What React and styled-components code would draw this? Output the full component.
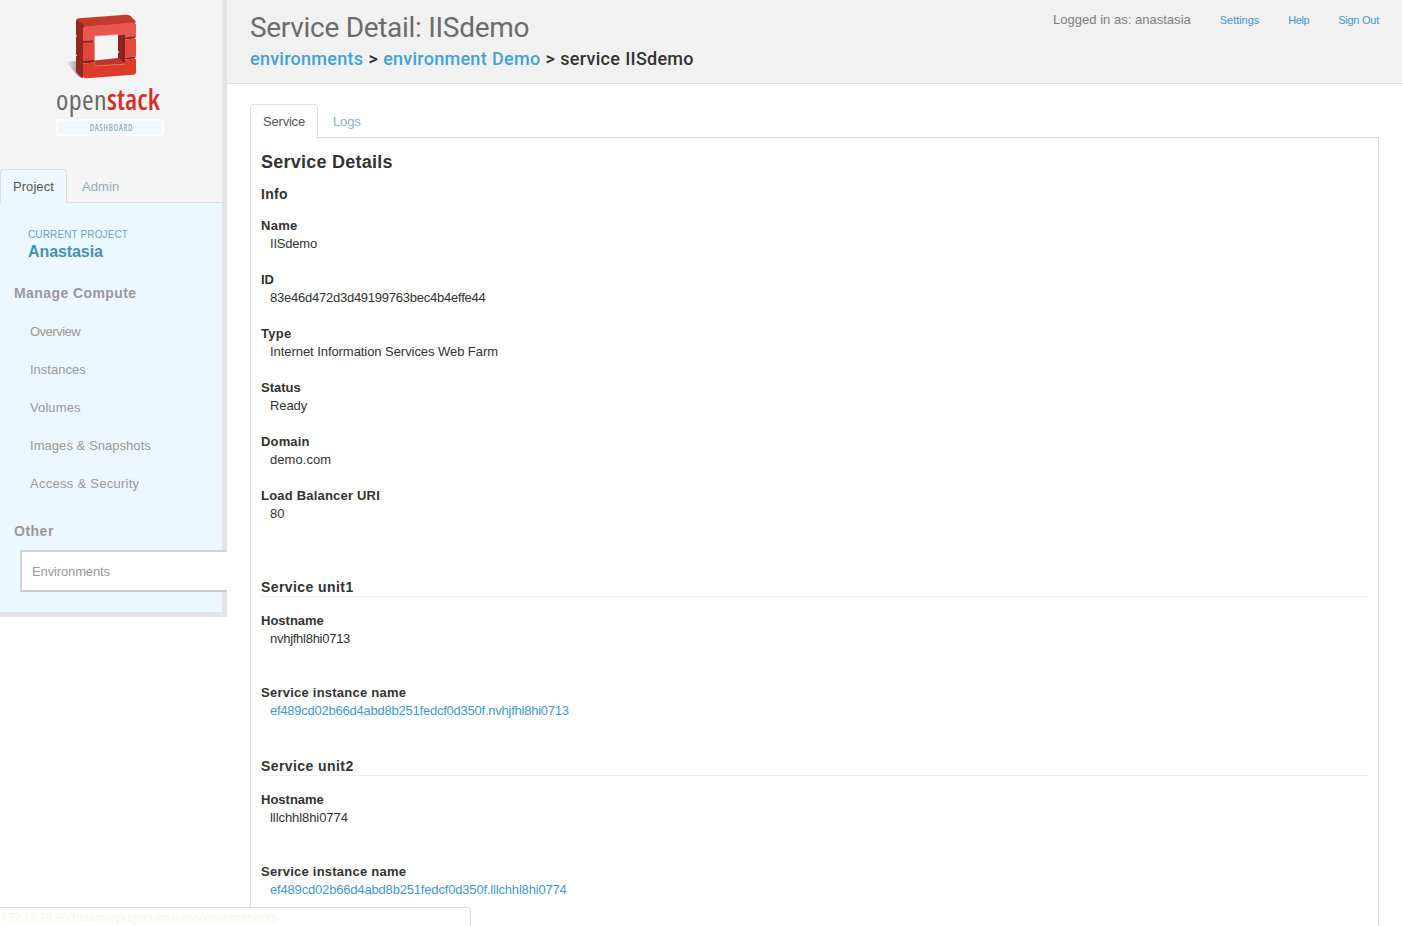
import React from "react";
import styled, { createGlobalStyle } from "styled-components";

const Global = createGlobalStyle`
  * { box-sizing: border-box; }
  body {
    margin: 0;
    background: #fff;
    color: #333;
    font: 13px/18px "Liberation Sans", Arial, sans-serif;
    overflow: hidden;
  }
`;

const Page = styled.div`
  display: flex;
  align-items: flex-start;
  height: 926px;
  overflow: hidden;
`;

/* ---- sidebar ---- */
const Sidebar = styled.aside`
  flex: none;
  width: 227px;
  height: 617px;
  border-right: 5px solid #e4e4e4;
  border-bottom: 5px solid #e4e4e4;
  background: #ecf8ff;
`;
const Brand = styled.div`
  display: flex;
  flex-direction: column;
  height: 169px;
  background: #f4f4f4;
`;
const Wordmark = styled.div`
  display: flex;
  margin-left: 56px;
  font: 400 28px/34px "Open Sans", sans-serif;
  font-stretch: 75%;
  letter-spacing: 0.4px;
  color: #6a6a6a;
`;
const WordmarkAccent = styled.span`
  font-weight: 600;
  letter-spacing: 0.05px;
  color: #d62f2b;
`;
const Badge = styled.div`
  margin: 3px 0 0 56px;
  width: 108px;
  height: 17px;
  border: 2px solid #fcfdfe;
  border-radius: 2px;
  background: #f1f8fc;
  text-align: center;
  font: 400 8.5px/13px "Open Sans", sans-serif;
  font-stretch: 75%;
  letter-spacing: 0.75px;
  padding-left: 3px;
  color: #7e9daf;
`;
const SideTabs = styled.div`
  display: flex;
  height: 34px;
  background: linear-gradient(#ddd, #ddd) bottom / 100% 1px no-repeat #f4f4f4;
`;
const Tab = styled.a`
  height: 34px;
  padding: 8px 12px;
  border: 1px solid ${(p) => (p.$active ? "#ddd" : "transparent")};
  border-bottom: 0;
  border-radius: 4px 4px 0 0;
  margin-right: 2px;
  background: ${(p) => (p.$active ? p.$bg : "transparent")};
  color: ${(p) => (p.$active ? "#555" : "#92aebc")};
  letter-spacing: ${(p) => p.$ls || 0}px;
  white-space: nowrap;
`;
const Project = styled.div`
  padding: 25px 0 0 28px;
`;
const Caption = styled.div`
  font-size: 10px;
  line-height: 14px;
  color: #6aa5c0;
  letter-spacing: 0.13px;
`;
const ProjectName = styled.div`
  font-size: 16px;
  line-height: 20px;
  font-weight: bold;
  color: #4790b2;
  letter-spacing: -0.08px;
`;
const NavHeading = styled.div`
  margin-top: ${(p) => p.$top}px;
  padding-left: 14px;
  font-size: 14px;
  font-weight: bold;
  line-height: 20px;
  color: #999;
  letter-spacing: ${(p) => p.$ls || 0}px;
`;
const NavList = styled.nav`
  display: flex;
  flex-direction: column;
  padding: 10px 0 0 30px;
`;
const NavItem = styled.a`
  height: 38px;
  line-height: 38px;
  color: #999;
  letter-spacing: ${(p) => p.$ls || 0}px;
`;
const ActiveItem = styled.a`
  display: block;
  margin: 9px -5px 0 20px;
  height: 42px;
  padding-left: 10px;
  border: solid #ccc;
  border-width: 2px 0 2px 2px;
  border-top-color: #d4d4d4;
  border-left-color: #d4d4d4;
  background: #fff;
  line-height: 39px;
  color: #999;
  letter-spacing: -0.13px;
`;

/* ---- main column ---- */
const Main = styled.main`
  flex: 1;
  min-width: 0;
`;
const Header = styled.header`
  display: flex;
  justify-content: space-between;
  height: 84px;
  padding: 0 23px;
  background: #f1f1f1;
  border-bottom: 1px solid #e0e0e0;
`;
const Titles = styled.div`
  font-family: Roboto, "Open Sans", sans-serif;
  white-space: nowrap;
`;
const Title = styled.h1`
  margin: 10px 0 0;
  font-size: 28px;
  line-height: 36px;
  font-weight: 400;
  color: #6c6c6c;
  letter-spacing: -0.3px;
`;
const Crumbs = styled.h3`
  margin: 1px 0 0;
  font-size: 18px;
  line-height: 24px;
  font-weight: 500;
  color: #333;
  letter-spacing: 0.26px;
  word-spacing: 0.4px;
`;
const Link = styled.a`
  color: #43a1d6;
`;
const UserInfo = styled.div`
  display: flex;
  padding-top: 11px;
  color: #808080;
  letter-spacing: 0.02px;
`;
const UserLink = styled.a`
  margin-left: 29px;
  font-size: 11px;
  color: #4398d0;
  letter-spacing: ${(p) => p.$ls || 0}px;
`;
const Content = styled.section`
  padding: 20px 23px 0;
`;
const ContentTabs = styled.div`
  display: flex;
  height: 34px;
  background: linear-gradient(#ddd, #ddd) bottom / 100% 1px no-repeat;
`;
const Panel = styled.div`
  height: 788px;
  padding: 12px 10px 0;
  border: solid #ddd;
  border-width: 0 1px;
`;
const PanelTitle = styled.h3`
  margin: 0 0 11px;
  font-size: 18px;
  line-height: 24px;
  letter-spacing: 0.24px;
`;
const SectionTitle = styled.h4`
  margin: 0 0 14px;
  font-size: 14px;
  line-height: 18px;
  letter-spacing: 0.3px;
`;
const UnitTitle = styled.h4`
  margin: ${(p) => p.$top}px 0 15px;
  font-size: 14px;
  line-height: 18px;
  border-bottom: 1px solid #eee;
  letter-spacing: 0.42px;
`;
const Details = styled.dl`
  display: flex;
  flex-direction: column;
  gap: ${(p) => p.$gap}px;
  margin: 0;
`;
const Term = styled.dt`
  font-weight: bold;
  letter-spacing: ${(p) => p.$ls || 0}px;
`;
const Value = styled.dd`
  margin: 0 0 0 9px;
  color: ${(p) => (p.$link ? "#4398d0" : "#333")};
  letter-spacing: ${(p) => p.$ls || 0}px;
`;
const StatusBar = styled.div`
  position: fixed;
  left: 0;
  bottom: 0;
  width: 471px;
  height: 19px;
  padding: 1px 1px 0;
  border: solid #ddd;
  border-width: 1px 1px 0 0;
  border-radius: 0 4px 0 0;
  background: #fff;
  color: #f8f5e8;
  font: 12px/18px "Open Sans", "Noto Sans", sans-serif;
  letter-spacing: -0.36px;
`;

const Logo = () => (
  <svg width="222" height="82" viewBox="0 0 222 82">
    <defs>
      <linearGradient id="shade" x1="0" x2="1">
        <stop offset="0" stopColor="#bbb" stopOpacity="0.2" />
        <stop offset="1" stopColor="#555" />
      </linearGradient>
    </defs>
    <path d="M66.500 62.500Q70 60.500 76 61.500V70L83 78Q80 78 76 74Z" fill="url(#shade)" />
    <path d="M76 21Q76 18.500 79 18.200L126 14.700Q128.500 14.500 130.500 16L136 21.500L134 24L83 28L76 24Z" fill="#c43a2b" />
    <path d="M76 21Q77 19 80 22L84.500 26L83 30V78L81 77L76 71.500V56.500L77 55.500L76 54.500V37L77 36L76 35Z" fill="#952720" />
    <path d="M83 30Q83 26.500 86.500 26.200L133 22.500Q136 22.300 136 25V37L125 38V34L94.500 36V41L83 41Z" fill="#e8564f" />
    <path d="M83 43L94.500 42V61L83 62Z" fill="#e2463a" />
    <path d="M83 41L94 40.500L93 42.500L83 43ZM83 61L94.500 60V62.500L83 63.500ZM125 37.500L136 36.500L134.500 38.500L125 39.500ZM125 57.500L136 56.500L134.500 58.500L125 59.500Z" fill="#8f211b" />
    <path d="M125 39.500L134.500 38.500L136 39.500V56.500L125 57.500Z" fill="#e3483c" />
    <path d="M83 63.500L94.500 62.500V66L125 64V59.500L134.500 58.500L136 59.500V72Q136 74.500 133 74.800L87 78.200Q83 78.500 83 76Z" fill="#dc3c28" />
    <path d="M118 34.500L125 34V64L118 58.500V53L119.500 52L118 51Z" fill="#8d211d" />
    <path d="M94.500 60.500L118 58L125 64L94.500 66Z" fill="#bb3629" />
    <path d="M94.500 36L125 34M94.500 66L125 64M94.500 36V60" fill="none" stroke="#ee8179" strokeWidth=".6" />
  </svg>
);

/* Each entry carries its own tracking, in pixels. */
const nav = [
  ["Overview", -0.5],
  ["Instances", 0],
  ["Volumes", 0.1],
  ["Images & Snapshots", 0.05],
  ["Access & Security", 0.27],
];

const info = [
  ["Name", 0.3, "IISdemo", -0.2],
  ["ID", 0, "83e46d472d3d49199763bec4b4effe44", -0.24],
  ["Type", 0.3, "Internet Information Services Web Farm", -0.06],
  ["Status", 0, "Ready", -0.1],
  ["Domain", 0.15, "demo.com", 0.05],
  ["Load Balancer URI", 0.2, "80", -0.1],
];

const units = [
  ["Service unit1", "nvhjfhl8hi0713", 55, -0.27, -0.235],
  ["Service unit2", "lllchhl8hi0774", 37, -0.07, -0.175],
];

export default function App() {
  return (
    <Page>
      <Global />
      <Sidebar>
        <Brand>
          <Logo />
          <Wordmark>open<WordmarkAccent>stack</WordmarkAccent></Wordmark>
          <Badge>DASHBOARD</Badge>
        </Brand>
        <SideTabs>
          <Tab $active $bg="#ecf8ff" $ls={0.06}>Project</Tab>
          <Tab $ls={0.1}>Admin</Tab>
        </SideTabs>
        <Project>
          <Caption>CURRENT PROJECT</Caption>
          <ProjectName>Anastasia</ProjectName>
        </Project>
        <NavHeading $top={21} $ls={0.42}>Manage Compute</NavHeading>
        <NavList>
          {nav.map(([name, ls]) => <NavItem key={name} $ls={ls}>{name}</NavItem>)}
        </NavList>
        <NavHeading $top={18} $ls={0.5}>Other</NavHeading>
        <ActiveItem>Environments</ActiveItem>
      </Sidebar>
      <Main>
        <Header>
          <Titles>
            <Title>Service Detail: IISdemo</Title>
            <Crumbs>
              <Link>environments</Link> &gt; <Link>environment Demo</Link> &gt; service IISdemo
            </Crumbs>
          </Titles>
          <UserInfo>
            <span>Logged in as: anastasia</span>
            <UserLink $ls={-0.05}>Settings</UserLink>
            <UserLink $ls={-0.4}>Help</UserLink>
            <UserLink $ls={-0.25}>Sign Out</UserLink>
          </UserInfo>
        </Header>
        <Content>
          <ContentTabs>
            <Tab $active $bg="#fff" $ls={-0.2}>Service</Tab>
            <Tab $ls={-0.1}>Logs</Tab>
          </ContentTabs>
          <Panel>
            <PanelTitle>Service Details</PanelTitle>
            <SectionTitle>Info</SectionTitle>
            <Details $gap={18}>
              {info.map(([k, kls, v, vls]) => (
                <div key={k}><Term $ls={kls}>{k}</Term><Value $ls={vls}>{v}</Value></div>
              ))}
            </Details>
            {units.map(([name, host, top, hostLs, linkLs]) => (
              <React.Fragment key={name}>
                <UnitTitle $top={top}>{name}</UnitTitle>
                <Details $gap={36}>
                  <div><Term>Hostname</Term><Value $ls={hostLs}>{host}</Value></div>
                  <div>
                    <Term $ls={0.24}>Service instance name</Term>
                    <Value $link $ls={linkLs}>ef489cd02b66d4abd8b251fedcf0d350f.{host}</Value>
                  </div>
                </Details>
              </React.Fragment>
            ))}
          </Panel>
        </Content>
      </Main>
      <StatusBar>172.18.79.90/horizon/project/murano/environments</StatusBar>
    </Page>
  );
}
